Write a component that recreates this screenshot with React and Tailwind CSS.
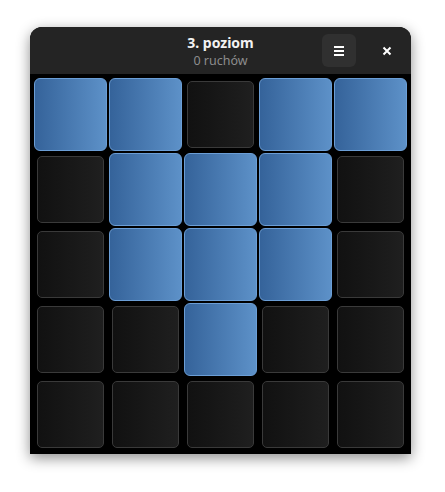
import { useState } from "react";

const LEVEL = [
  [1, 1, 0, 1, 1],
  [0, 1, 1, 1, 0],
  [0, 1, 1, 1, 0],
  [0, 0, 1, 0, 0],
  [0, 0, 0, 0, 0],
];

function Tile({ lit }) {
  return (
    <div className="w-[75px] h-[75px] flex">
      {lit ? (
        <div className="m-[1px] flex-1 rounded-[6px] border border-[#6b9ed6] bg-gradient-to-r from-[#35639a] to-[#5d91c8]" />
      ) : (
        <div className="m-[4px] flex-1 rounded-[5px] border border-[#3a3a3a] bg-gradient-to-r from-[#111111] to-[#1f1f1f]" />
      )}
    </div>
  );
}

export default function App() {
  const [moves] = useState(0);

  return (
    <div className="min-h-[492px] bg-white pt-[27px] pl-[30px] font-['Noto_Sans',sans-serif]">
      <div className="w-[381px] rounded-t-[12px] overflow-hidden bg-black shadow-[0_4px_14px_rgba(0,0,0,0.45)]">
        <div className="h-[47px] bg-[#242424] flex items-center relative">
          <div className="flex-1 flex flex-col items-center gap-[2px] pt-[2px]">
            <span className="text-[14px] leading-[16px] font-bold text-[#f2f2f2]">3. poziom</span>
            <span className="text-[12.5px] leading-[15px] text-[#8d8d8d]">{moves} ruchów</span>
          </div>
          <div className="absolute right-[55px] top-[7px] w-[34px] h-[33px] rounded-[6px] bg-[#303030] flex flex-col items-center justify-center gap-[2px]">
            <span className="block w-[10px] h-[2px] bg-white" />
            <span className="block w-[10px] h-[2px] bg-white" />
            <span className="block w-[10px] h-[2px] bg-white" />
          </div>
          <div className="absolute right-[18px] top-[18px] w-[12px] h-[12px] flex items-center justify-center">
            <svg width="10" height="10" viewBox="0 0 10 10">
              <path d="M1.5 1.5 L8.5 8.5 M8.5 1.5 L1.5 8.5" stroke="#fff" strokeWidth="2" />
            </svg>
          </div>
        </div>
        <div className="px-[3px] pt-[3px] pb-[2px] grid grid-cols-5">
          {LEVEL.flat().map((lit, i) => (
            <Tile key={i} lit={lit === 1} />
          ))}
        </div>
      </div>
    </div>
  );
}
